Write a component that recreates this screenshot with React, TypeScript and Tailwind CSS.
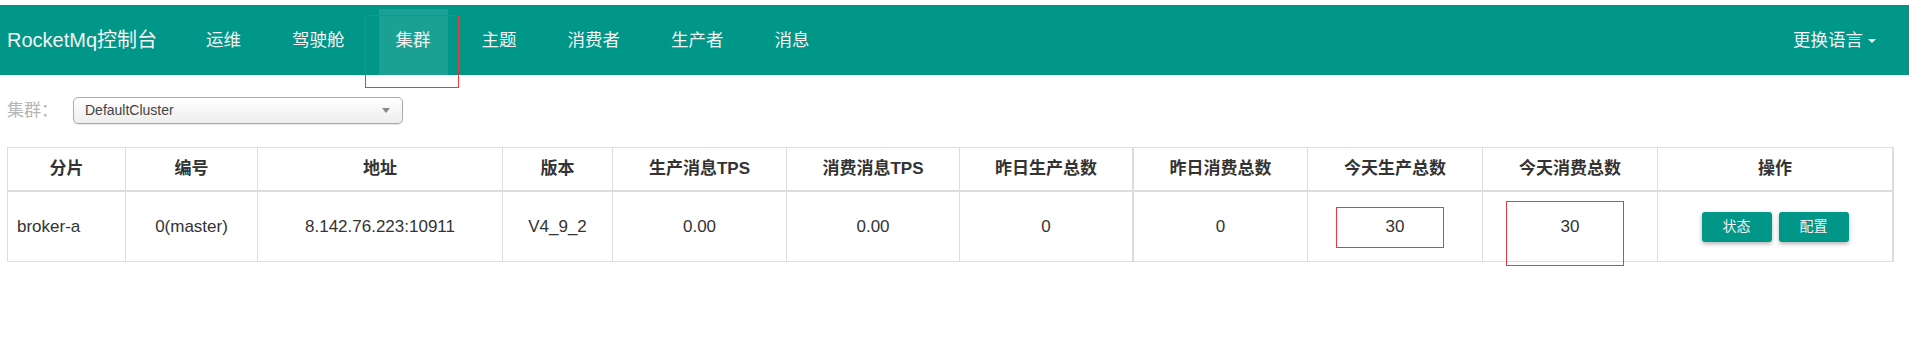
const navItems = ['运维', '驾驶舱', '集群', '主题', '消费者', '生产者', '消息'];

const columns = [
  { title: '分片', w: 'w-[118px]' },
  { title: '编号', w: 'w-[132px]' },
  { title: '地址', w: 'w-[245px]' },
  { title: '版本', w: 'w-[110px]' },
  { title: '生产消息TPS', w: 'w-[174px]' },
  { title: '消费消息TPS', w: 'w-[173px]' },
  { title: '昨日生产总数', w: 'w-[174px]', thick: true },
  { title: '昨日消费总数', w: 'w-[174px]' },
  { title: '今天生产总数', w: 'w-[175px]' },
  { title: '今天消费总数', w: 'w-[175px]' },
  { title: '操作', w: 'w-[236px]', thick: true },
];

const row = ['broker-a', '0(master)', '8.142.76.223:10911', 'V4_9_2', '0.00', '0.00', '0', '0', '30', '30'];

function Cell({ w, thick, header, children, left }: { w: string; thick?: boolean; header?: boolean; children: React.ReactNode; left?: boolean }) {
  return (
    <div
      className={[
        w,
        'flex shrink-0 items-center border-[#ddd]',
        thick ? 'border-r-2' : 'border-r',
        header ? 'h-[44px] border-b-2 font-bold' : 'h-[70px] border-b',
        left ? 'justify-start pl-[9px]' : 'justify-center',
      ].join(' ')}
    >
      {children}
    </div>
  );
}

export default function App() {
  return (
    <div className="relative h-[353px] w-full bg-white font-['Liberation_Sans','Noto_Sans_CJK_SC',sans-serif] text-[#333]">
      <div className="h-[5px]" />
      <nav className="flex h-[70px] items-stretch bg-[#009688] text-[#f3f3f3]">
        <div className="flex w-[189px] items-center pl-[7px] text-[20px]">RocketMq控制台</div>
        <ul className="flex gap-[17px]">
          {navItems.map((item) => (
            <li
              key={item}
              className={
                item === '集群'
                  ? 'mt-[4px] flex items-center bg-[#1ba193] px-[17px] pb-[4px] text-[17.5px]'
                  : 'flex items-center px-[17px] text-[17.5px]'
              }
            >
              {item}
            </li>
          ))}
        </ul>
        <div className="ml-auto flex items-center gap-[5px] pr-[33px] text-[17.5px]">
          <span>更换语言</span>
          <span className="mt-[1px] h-0 w-0 border-x-[4px] border-t-[4px] border-x-transparent border-t-[#f3f3f3]" />
        </div>
      </nav>

      <div className="mt-[22px] flex items-center pl-[7px]">
        <span className="w-[66px] text-[17px] text-[#b5b5b5]">集群：</span>
        <div className="flex h-[27px] w-[330px] items-center justify-between rounded-[5px] border border-[#aaa] bg-gradient-to-b from-white via-[#f6f6f6] to-[#eee] pl-[11px] pr-[12px] text-[14px] text-[#444] shadow-[0_1px_1px_rgba(0,0,0,0.1)]">
          <span>DefaultCluster</span>
          <span className="h-0 w-0 border-x-[4px] border-t-[5px] border-x-transparent border-t-[#888]" />
        </div>
      </div>

      <div className="mt-[23px] ml-[7px] inline-flex flex-col border-l border-t border-[#ddd] text-[17px]">
        <div className="flex">
          {columns.map((c) => (
            <Cell key={c.title} w={c.w} thick={c.thick} header>
              {c.title}
            </Cell>
          ))}
        </div>
        <div className="flex">
          {row.map((v, i) => (
            <Cell key={i} w={columns[i].w} thick={columns[i].thick} left={i === 0}>
              {v}
            </Cell>
          ))}
          <Cell w={columns[10].w} thick>
            <div className="flex gap-[7px]">
              <button className="h-[30px] w-[70px] rounded-[3px] bg-[#009688] text-[14px] text-[#f3f3f3] shadow-[0_2px_4px_rgba(0,0,0,0.3)]">状态</button>
              <button className="h-[30px] w-[70px] rounded-[3px] bg-[#009688] text-[14px] text-[#f3f3f3] shadow-[0_2px_4px_rgba(0,0,0,0.3)]">配置</button>
            </div>
          </Cell>
        </div>
      </div>

      {/* red annotation boxes */}
      <div className="absolute left-[365px] top-[15px] h-[73px] w-[94px] border border-[#ee3a3a]" />
      <div className="absolute left-[1336px] top-[207px] h-[41px] w-[108px] border border-[#ee3a3a]" />
      <div className="absolute left-[1506px] top-[201px] h-[65px] w-[118px] border border-[#ee3a3a]" />
    </div>
  );
}
